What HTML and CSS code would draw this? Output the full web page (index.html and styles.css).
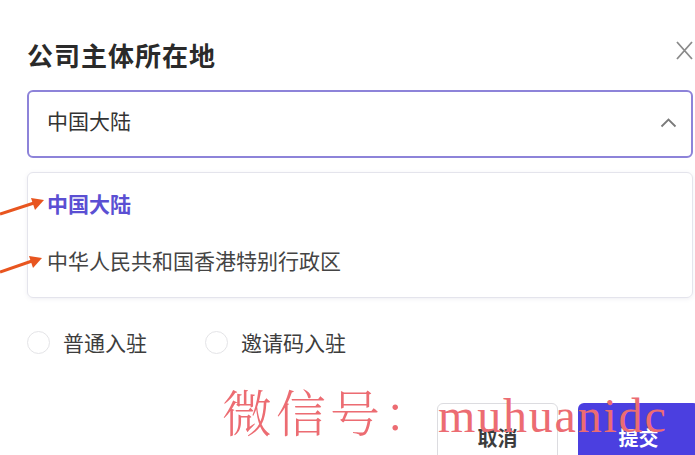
FILE: index.html
```html
<!DOCTYPE html>
<html lang="zh-CN">
<head>
<meta charset="utf-8">
<title>公司主体所在地</title>
<link rel="stylesheet" href="styles.css">
</head>
<body>
<div class="dialog">
  <div class="header">
    <h1 class="title">公司主体所在地</h1>
    <svg class="close" width="17" height="19" viewBox="0 0 17 19"><path d="M1 1 L16 18 M16 1 L1 18" stroke="#8a8a8a" stroke-width="1.8" fill="none"/></svg>
  </div>
  <div class="select">
    <span class="select-value">中国大陆</span>
    <svg class="chevron" width="17" height="10" viewBox="0 0 17 10"><path d="M1.5 8.5 L8.5 1.5 L15.5 8.5" stroke="#7a7a7a" stroke-width="1.8" fill="none"/></svg>
  </div>
  <div class="dropdown">
    <div class="option active">中国大陆</div>
    <div class="option">中华人民共和国香港特别行政区</div>
  </div>
  <div class="radios">
    <label class="radio"><span class="circle"></span><span class="radio-label">普通入驻</span></label>
    <label class="radio"><span class="circle"></span><span class="radio-label">邀请码入驻</span></label>
  </div>
  <div class="footer">
    <button class="btn btn-cancel">取消</button>
    <button class="btn btn-submit">提交</button>
  </div>
</div>
<svg class="arrows" width="50" height="100" viewBox="0 0 50 100">
  <path d="M0 24 L34 13" stroke="#e8551f" stroke-width="3" fill="none"/>
  <path d="M44 10 L31 8 L35 20 Z" fill="#e8551f"/>
  <path d="M0 82 L32 71" stroke="#e8551f" stroke-width="3" fill="none"/>
  <path d="M42 68 L29 66 L33 78 Z" fill="#e8551f"/>
</svg>
<div class="watermark"><span class="wm-cjk">微信号：</span><span class="wm-latin">muhuanidc</span></div>
</body>
</html>
```

FILE: styles.css
```css
html, body {
  margin: 0;
  padding: 0;
  background: #ffffff;
  overflow: hidden;
  height: 455px;
}

body {
  font-family: "Noto Sans CJK SC", "Noto Sans", sans-serif;
  color: #333333;
  position: relative;
}

.dialog {
  width: 666px;
  padding-left: 27px;
}

.header {
  margin-top: 38px;
  height: 34px;
  display: flex;
  align-items: center;
  justify-content: space-between;
}

.title {
  margin: 0;
  font-size: 26px;
  font-weight: 700;
  color: #2a2a2a;
  line-height: 34px;
  letter-spacing: 1px;
}

.close {
  margin-bottom: 9px;
}

.select {
  margin-top: 18px;
  height: 68px;
  box-sizing: border-box;
  border: 2px solid #8d83d9;
  border-radius: 6px;
  display: flex;
  align-items: center;
  justify-content: space-between;
  padding: 0 14px 0 18px;
}

.select-value {
  font-size: 21px;
  line-height: 28px;
  margin-bottom: 8px;
  color: #333333;
}

.chevron {
  margin-top: -2px;
}

.dropdown {
  margin-top: 14px;
  height: 126px;
  box-sizing: border-box;
  border: 1px solid #e4e4ec;
  border-radius: 6px;
  box-shadow: 0 1px 4px rgba(120, 120, 160, 0.12);
  padding: 5px 0;
}

.option {
  height: 57px;
  box-sizing: border-box;
  display: flex;
  align-items: center;
  padding-left: 19px;
  padding-bottom: 7px;
  font-size: 21px;
  color: #444444;
}

.option.active {
  color: #5b4fd3;
  font-weight: 700;
}

.radios {
  margin-top: 32px;
  height: 24px;
  display: flex;
  align-items: center;
  gap: 58px;
}

.radio {
  display: flex;
  align-items: center;
  gap: 13px;
}

.circle {
  width: 21px;
  height: 21px;
  border: 1.5px solid #e4e4e7;
  border-radius: 50%;
}

.radio-label {
  font-size: 21px;
  color: #3d3d3d;
}

.footer {
  margin-top: 49px;
  margin-right: -6px;
  display: flex;
  justify-content: flex-end;
  gap: 20px;
}

.btn {
  width: 121px;
  height: 68px;
  border-radius: 6px;
  font-family: "Noto Sans CJK SC", sans-serif;
  font-size: 20px;
  font-weight: 700;
  padding: 0;
}

.btn-cancel {
  background: #ffffff;
  border: 1.5px solid #dcdce0;
  color: #3c3c3c;
}

.btn-submit {
  background: #4b3fe0;
  border: none;
  color: #ffffff;
}

.arrows {
  position: absolute;
  left: 0;
  top: 190px;
}

.watermark {
  position: absolute;
  left: 222px;
  top: 380px;
  color: #ec6c72;
  white-space: nowrap;
  line-height: 60px;
  height: 60px;
}

.wm-cjk {
  font-family: "Noto Serif CJK SC", "Noto Sans CJK SC", serif;
  font-weight: 300;
  font-size: 50px;
  letter-spacing: 4px;
}

.wm-latin {
  font-family: "Liberation Serif", serif;
  font-size: 48px;
  letter-spacing: 1.8px;
}
```
